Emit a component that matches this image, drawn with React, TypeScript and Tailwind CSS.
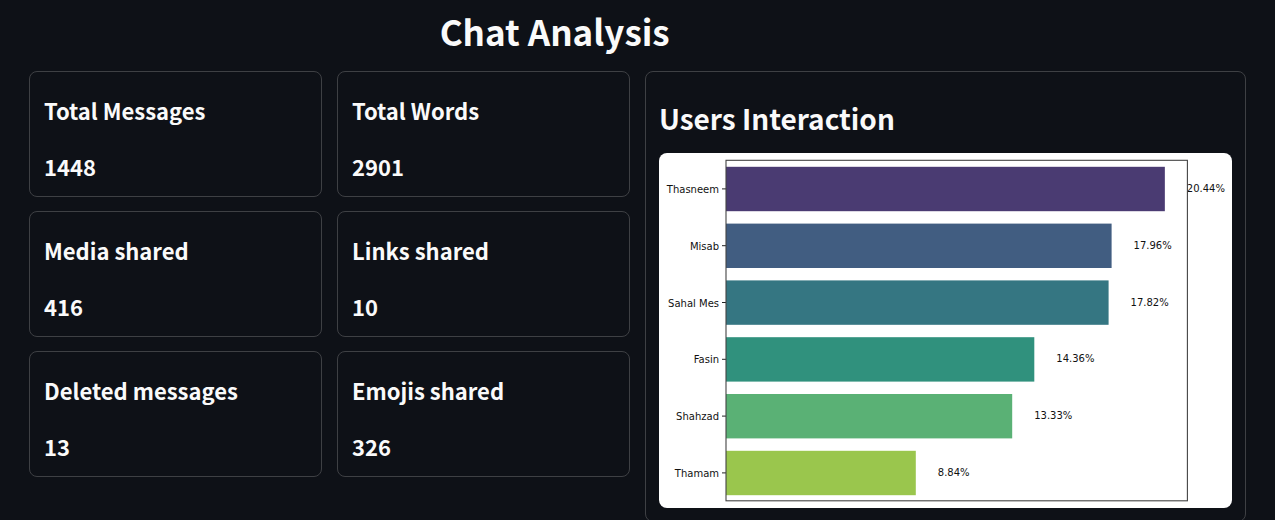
const stats = [
  { label: 'Total Messages', value: '1448' },
  { label: 'Total Words', value: '2901' },
  { label: 'Media shared', value: '416' },
  { label: 'Links shared', value: '10' },
  { label: 'Deleted messages', value: '13' },
  { label: 'Emojis shared', value: '326' },
];

const users = [
  { name: 'Thasneem', share: 20.44, color: '#4a3b72' },
  { name: 'Misab', share: 17.96, color: '#415d81' },
  { name: 'Sahal Mes', share: 17.82, color: '#357682' },
  { name: 'Fasin', share: 14.36, color: '#30917d' },
  { name: 'Shahzad', share: 13.33, color: '#5ab175' },
  { name: 'Thamam', share: 8.84, color: '#9ac64d' },
];

const AXIS_X = 67;
const UNIT = 21.47;
const ROW = 56.8;

function StatCard({ label, value }: { label: string; value: string }) {
  return (
    <section className="rounded-lg border border-[#3e4044] px-[14px] pt-[22px] pb-[14px] text-[22px] leading-8 font-semibold">
      <h2>{label}</h2>
      <p className="mt-6">{value}</p>
    </section>
  );
}

function InteractionChart() {
  return (
    <svg
      viewBox="0 0 573 355"
      role="img"
      aria-label="Users Interaction"
      className="block w-full rounded-lg bg-white font-['DejaVu_Sans',sans-serif] text-[10px]"
    >
      {users.map((user, i) => {
        const top = 13.8 + i * ROW;
        const middle = top + 22.1;
        const width = user.share * UNIT;
        return (
          <g key={user.name}>
            <rect x={AXIS_X} y={top} width={width} height={44.4} fill={user.color} />
            <path d={`M${AXIS_X - 4} ${middle}H${AXIS_X}`} stroke="#222" />
            <text x={AXIS_X - 7} y={middle + 4} textAnchor="end" fill="#111">
              {user.name}
            </text>
            <text x={AXIS_X + width + 22} y={middle + 3} fill="#111">
              {user.share.toFixed(2)}%
            </text>
          </g>
        );
      })}
      <rect x={AXIS_X} y="7.3" width="461.4" height="340.5" fill="none" stroke="#444" strokeWidth="1.1" />
    </svg>
  );
}

export default function App() {
  return (
    <main className="min-h-screen bg-[#0e1117] px-[29px] font-['Noto_Sans_CJK_SC','Noto_Sans',sans-serif] text-[#fafafa]">
      <header className="grid grid-cols-3 gap-[15px] pt-[7px] pb-4">
        <h1 className="col-start-2 text-[35px] leading-[48px] font-bold whitespace-nowrap">Chat Analysis</h1>
      </header>
      <div className="grid grid-cols-2 items-start gap-[15px]">
        <div className="grid grid-cols-2 gap-x-[15px] gap-y-[14px]">
          {stats.map((stat) => (
            <StatCard key={stat.label} label={stat.label} value={stat.value} />
          ))}
        </div>
        <section className="rounded-lg border border-[#3e4044] px-[13px] pt-[26px] pb-[13px]">
          <h2 className="mb-[15px] text-[28px] leading-10 font-semibold">Users Interaction</h2>
          <InteractionChart />
        </section>
      </div>
    </main>
  );
}
